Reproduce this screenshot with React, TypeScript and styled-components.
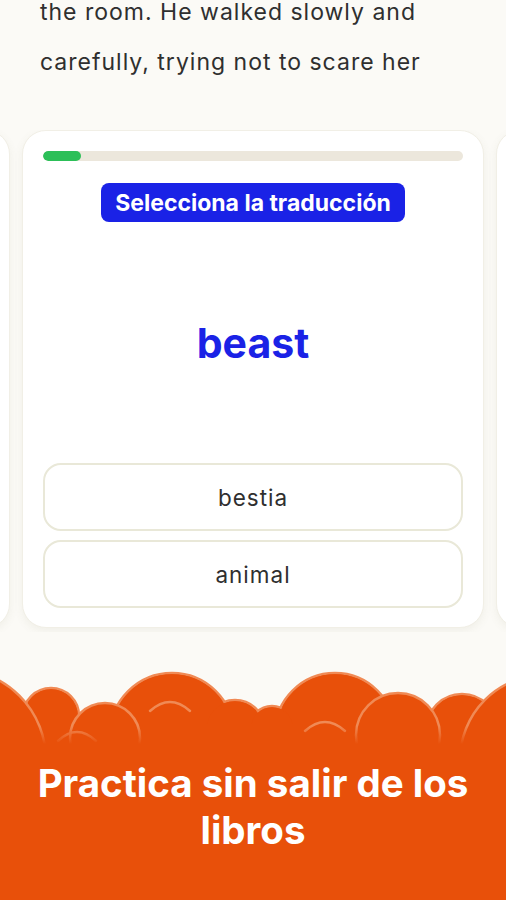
import React from 'react'
import styled, { createGlobalStyle } from 'styled-components'

const Colors = {
  page: '#fbfaf6',
  text: '#2f2f2f',
  blue: '#1a22e6',
  green: '#2cbf58',
  track: '#ece7dc',
  optionBorder: '#e9e8d8',
  cardBorder: '#f1efe6',
  orange: '#e8500a',
  orangeLine: '#f08a55',
}

const GlobalStyle = createGlobalStyle`
  html, body {
    margin: 0;
    padding: 0;
    background: ${Colors.page};
  }
  * {
    box-sizing: border-box;
  }
`

const options = ['bestia', 'animal']

// cloud edge, svg coords (y = page y - 660)
// back bumps only show their outer silhouette
const backBumps = [
  { cx: 172, cy: 75, r: 62 },
  { cx: 335, cy: 73, r: 60 },
  { cx: 235, cy: 70, r: 30 },
  { cx: 272, cy: 68, r: 22 },
  { cx: 51, cy: 56, r: 28 },
  { cx: 462, cy: 70, r: 36 },
]

// front bumps show their whole outline inside the orange
const frontBumps = [
  { cx: 105, cy: 78, r: 35 },
  { cx: 398, cy: 75, r: 42 },
  { cx: 545, cy: 100, r: 85 },
  { cx: -45, cy: 100, r: 91 },
]

const innerArcs = [
  { x: 58, y: 72, w: 38 },
  { x: 150, y: 42, w: 40 },
  { x: 305, y: 62, w: 40 },
]

const Clouds = () => (
  <CloudSvg viewBox="0 0 506 100" width={506} height={100}>
    <defs>
      <linearGradient id="cloudFade" x1="0" y1="0" x2="0" y2="1">
        <stop offset="0" stopColor={Colors.orange} stopOpacity={0} />
        <stop offset="1" stopColor={Colors.orange} stopOpacity={1} />
      </linearGradient>
    </defs>
    {backBumps.map((b, i) => (
      <circle key={`s${i}`} cx={b.cx} cy={b.cy} r={b.r} fill={Colors.orange} stroke={Colors.orangeLine} strokeWidth={2.5} />
    ))}
    {backBumps.map((b, i) => (
      <circle key={`f${i}`} cx={b.cx} cy={b.cy} r={b.r - 1.2} fill={Colors.orange} />
    ))}
    <rect x={0} y={64} width={506} height={36} fill={Colors.orange} />
    {frontBumps.map((b, i) => (
      <circle key={`b${i}`} cx={b.cx} cy={b.cy} r={b.r} fill={Colors.orange} stroke={Colors.orangeLine} strokeWidth={2.5} />
    ))}
    {innerArcs.map((a, i) => (
      <path
        key={`a${i}`}
        d={`M${a.x} ${a.y + 9} Q${a.x + a.w / 2} ${a.y - 9} ${a.x + a.w} ${a.y + 9}`}
        fill="none"
        stroke={Colors.orangeLine}
        strokeWidth={2.5}
        strokeLinecap="round"
      />
    ))}
    <rect x={0} y={66} width={506} height={18} fill="url(#cloudFade)" />
    <rect x={0} y={84} width={506} height={16} fill={Colors.orange} />
  </CloudSvg>
)

export default function App() {
  return (
    <>
      <GlobalStyle />
      <Page>
        <Passage>
          the room. He walked slowly and
          <br />
          carefully, trying not to scare her
        </Passage>

        <Carousel>
          <SideCard />
          <Card>
            <Progress>
              <ProgressFill style={{ width: '9%' }} />
            </Progress>
            <Prompt>Selecciona la traducción</Prompt>
            <Word>beast</Word>
            <Options>
              {options.map((o) => (
                <Option key={o}>{o}</Option>
              ))}
            </Options>
          </Card>
          <SideCard />
        </Carousel>

        <Footer>
          <Clouds />
          <Banner>Practica sin salir de los libros</Banner>
        </Footer>
      </Page>
    </>
  )
}

const Page = styled.div`
  height: 900px;
  overflow: hidden;
  display: flex;
  flex-direction: column;
  background: ${Colors.page};
`

const Passage = styled.p`
  margin: -13px 0 0;
  padding: 0 40px;
  font-family: Inter, 'Liberation Sans', sans-serif;
  font-size: 23px;
  letter-spacing: 1px;
  line-height: 50px;
  color: ${Colors.text};
  white-space: nowrap;
`

const Carousel = styled.div`
  margin-top: 43px;
  display: flex;
  justify-content: center;
  gap: 12px;
  overflow: hidden;
  padding-bottom: 4px;
`

const CardBase = styled.div`
  flex: 0 0 462px;
  height: 498px;
  background: #ffffff;
  border: 1px solid ${Colors.cardBorder};
  border-radius: 24px;
  box-shadow: 0 3px 8px rgba(120, 110, 80, 0.08);
`

const SideCard = styled(CardBase)``

const Card = styled(CardBase)`
  display: flex;
  flex-direction: column;
  align-items: center;
  padding: 20px 20px 19px;
`

const Progress = styled.div`
  width: 100%;
  height: 10px;
  border-radius: 5px;
  background: ${Colors.track};
  overflow: hidden;
`

const ProgressFill = styled.div`
  height: 100%;
  border-radius: 5px;
  background: ${Colors.green};
`

const Prompt = styled.div`
  margin-top: 22px;
  height: 39px;
  padding: 0 14px;
  display: flex;
  align-items: center;
  border-radius: 8px;
  background: ${Colors.blue};
  color: #ffffff;
  font-family: Inter, 'Liberation Sans', sans-serif;
  font-weight: 700;
  font-size: 23px;
`

const Word = styled.div`
  flex: 1;
  display: flex;
  align-items: center;
  justify-content: center;
  font-family: Inter, 'Liberation Sans', sans-serif;
  font-weight: 700;
  font-size: 41px;
  color: ${Colors.blue};
`

const Options = styled.div`
  width: 100%;
  display: flex;
  flex-direction: column;
  gap: 9px;
`

const Option = styled.div`
  height: 68px;
  display: flex;
  align-items: center;
  justify-content: center;
  border: 2px solid ${Colors.optionBorder};
  border-radius: 18px;
  background: #ffffff;
  font-family: Inter, 'Liberation Sans', sans-serif;
  font-size: 22.5px;
  letter-spacing: 1px;
  color: ${Colors.text};
`

const Footer = styled.div`
  margin-top: auto;
  display: flex;
  flex-direction: column;
`

const CloudSvg = styled.svg`
  display: block;
`

const Banner = styled.div`
  height: 140px;
  padding: 0 20px;
  background: ${Colors.orange};
  color: #ffffff;
  text-align: center;
  font-family: Inter, 'Liberation Sans', sans-serif;
  font-weight: 700;
  font-size: 38.5px;
  line-height: 47px;
`
